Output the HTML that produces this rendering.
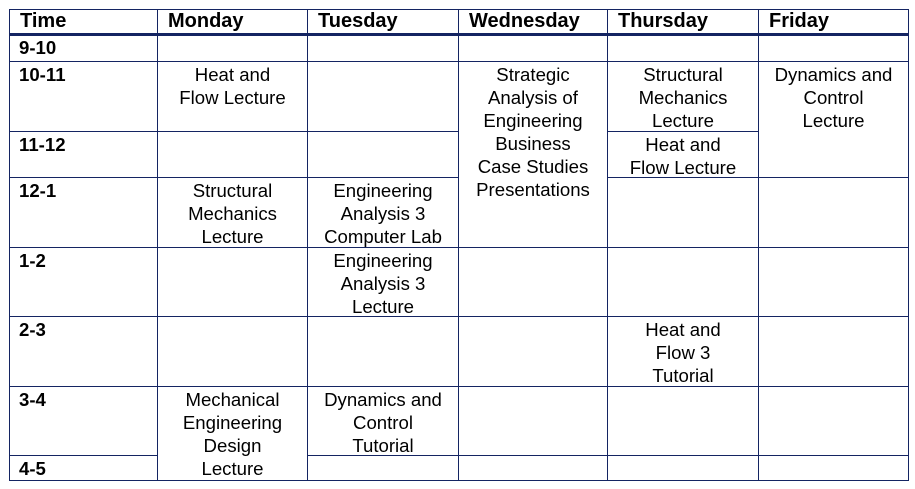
<!DOCTYPE html>
<html><head><meta charset="utf-8"><style>
body{margin:0;width:915px;height:489px;background:#fff;position:relative;overflow:hidden;font-family:"Liberation Sans",Arial,sans-serif;color:#000}
.c{position:absolute;box-sizing:border-box;border:1px solid #142462;font-size:18.6px;line-height:23px;text-align:center;padding-top:1px}
.h{font-weight:bold;font-size:20px;line-height:22px;text-align:left;padding-left:10px;border-bottom:3px solid #142462;padding-top:0}
.t{font-weight:bold;text-align:left;padding-left:9px}
</style></head><body>
<div class="c h" style="left:9px;top:9px;width:149px;height:27px">Time</div>
<div class="c h" style="left:157px;top:9px;width:151px;height:27px">Monday</div>
<div class="c h" style="left:307px;top:9px;width:152px;height:27px">Tuesday</div>
<div class="c h" style="left:458px;top:9px;width:150px;height:27px">Wednesday</div>
<div class="c h" style="left:607px;top:9px;width:152px;height:27px">Thursday</div>
<div class="c h" style="left:758px;top:9px;width:151px;height:27px">Friday</div>
<div class="c t" style="left:9px;top:34px;width:149px;height:28px;border-top:none;padding-top:2px">9-10</div>
<div class="c t" style="left:9px;top:61px;width:149px;height:71px">10-11</div>
<div class="c t" style="left:9px;top:131px;width:149px;height:47px">11-12</div>
<div class="c t" style="left:9px;top:177px;width:149px;height:71px">12-1</div>
<div class="c t" style="left:9px;top:247px;width:149px;height:70px">1-2</div>
<div class="c t" style="left:9px;top:316px;width:149px;height:71px">2-3</div>
<div class="c t" style="left:9px;top:386px;width:149px;height:70px">3-4</div>
<div class="c t" style="left:9px;top:455px;width:149px;height:26px">4-5</div>
<div class="c" style="left:157px;top:34px;width:151px;height:28px;border-top:none"></div>
<div class="c" style="left:157px;top:61px;width:151px;height:71px">Heat and<br>Flow Lecture</div>
<div class="c" style="left:157px;top:131px;width:151px;height:47px"></div>
<div class="c" style="left:157px;top:177px;width:151px;height:71px">Structural<br>Mechanics<br>Lecture</div>
<div class="c" style="left:157px;top:247px;width:151px;height:70px"></div>
<div class="c" style="left:157px;top:316px;width:151px;height:71px"></div>
<div class="c" style="left:157px;top:386px;width:151px;height:95px">Mechanical<br>Engineering<br>Design<br>Lecture</div>
<div class="c" style="left:307px;top:34px;width:152px;height:28px;border-top:none"></div>
<div class="c" style="left:307px;top:61px;width:152px;height:71px"></div>
<div class="c" style="left:307px;top:131px;width:152px;height:47px"></div>
<div class="c" style="left:307px;top:177px;width:152px;height:71px">Engineering<br>Analysis 3<br>Computer Lab</div>
<div class="c" style="left:307px;top:247px;width:152px;height:70px">Engineering<br>Analysis 3<br>Lecture</div>
<div class="c" style="left:307px;top:316px;width:152px;height:71px"></div>
<div class="c" style="left:307px;top:386px;width:152px;height:70px">Dynamics and<br>Control<br>Tutorial</div>
<div class="c" style="left:307px;top:455px;width:152px;height:26px"></div>
<div class="c" style="left:458px;top:34px;width:150px;height:28px;border-top:none"></div>
<div class="c" style="left:458px;top:61px;width:150px;height:187px">Strategic<br>Analysis of<br>Engineering<br>Business<br>Case Studies<br>Presentations</div>
<div class="c" style="left:458px;top:247px;width:150px;height:70px"></div>
<div class="c" style="left:458px;top:316px;width:150px;height:71px"></div>
<div class="c" style="left:458px;top:386px;width:150px;height:70px"></div>
<div class="c" style="left:458px;top:455px;width:150px;height:26px"></div>
<div class="c" style="left:607px;top:34px;width:152px;height:28px;border-top:none"></div>
<div class="c" style="left:607px;top:61px;width:152px;height:71px">Structural<br>Mechanics<br>Lecture</div>
<div class="c" style="left:607px;top:131px;width:152px;height:47px">Heat and<br>Flow Lecture</div>
<div class="c" style="left:607px;top:177px;width:152px;height:71px"></div>
<div class="c" style="left:607px;top:247px;width:152px;height:70px"></div>
<div class="c" style="left:607px;top:316px;width:152px;height:71px">Heat and<br>Flow 3<br>Tutorial</div>
<div class="c" style="left:607px;top:386px;width:152px;height:70px"></div>
<div class="c" style="left:607px;top:455px;width:152px;height:26px"></div>
<div class="c" style="left:758px;top:34px;width:151px;height:28px;border-top:none"></div>
<div class="c" style="left:758px;top:61px;width:151px;height:117px">Dynamics and<br>Control<br>Lecture</div>
<div class="c" style="left:758px;top:177px;width:151px;height:71px"></div>
<div class="c" style="left:758px;top:247px;width:151px;height:70px"></div>
<div class="c" style="left:758px;top:316px;width:151px;height:71px"></div>
<div class="c" style="left:758px;top:386px;width:151px;height:70px"></div>
<div class="c" style="left:758px;top:455px;width:151px;height:26px"></div>
</body></html>
